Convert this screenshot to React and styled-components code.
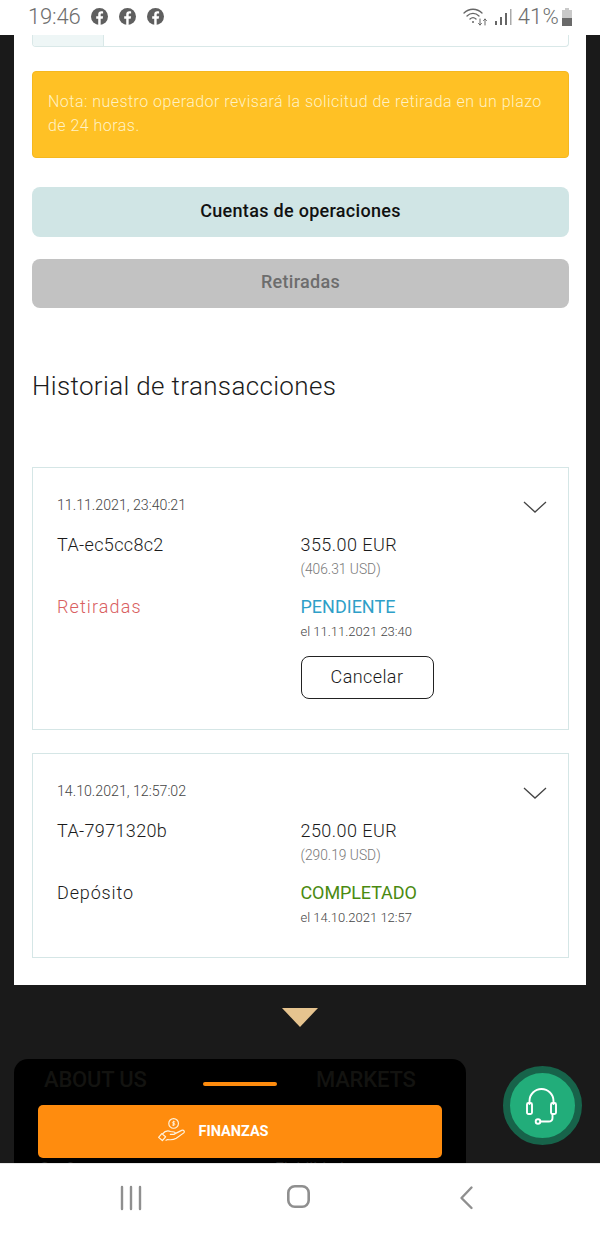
import React from 'react';
import styled, { createGlobalStyle } from 'styled-components';

const Global = createGlobalStyle`
  html, body { margin: 0; padding: 0; height: 100%; }
  body { font-family: Roboto, "Liberation Sans", sans-serif; background: #1a1a1a; }
  * { box-sizing: border-box; }
`;
const Screen = styled.div`
  position: relative; width: 600px; height: 1233px; overflow: hidden;
  display: flex; flex-direction: column; background: #1a1a1a;
`;
const StatusBar = styled.div`
  height: 35px; background: #fff; flex: none; display: flex; align-items: center;
  justify-content: space-between; padding: 0 27px 2px 28px; color: #6e6e6e;
`;
const StatusGroup = styled.div`display: flex; align-items: center; gap: ${p => p.$gap || 0}px;`;
const Clock = styled.span`font-size: 22px; font-weight: 300; letter-spacing: -.2px;`;
const Percent = styled.span`font-size: 22px; font-weight: 300; letter-spacing: .2px;`;
const Main = styled.div`flex: 1; min-height: 0; overflow: hidden; display: flex; flex-direction: column;`;
const Panel = styled.div`
  flex: none; margin: 0 14px; height: 950px; background: #fff; padding: 0 17px 0 18px;
  display: flex; flex-direction: column;
`;
const ClippedTable = styled.div`
  flex: none; height: 12px; display: flex; border: 1px solid #d9e8e8; border-top: 0;
  border-radius: 0 0 4px 4px; overflow: hidden;
`;
const ClippedCell = styled.div`width: 71px; background: #eef6f6; border-right: 1px solid #d9e8e8;`;
const Note = styled.div`
  margin-top: 24px; height: 87px; background: #ffc125; border: 1px solid #f5b81f; border-radius: 4px;
  padding: 18px 15px; color: #fff2c4; font-size: 16px; line-height: 24px; font-weight: 300; letter-spacing: .47px;
`;
const WideButton = styled.div`
  height: ${p => p.$h}px; margin-top: ${p => p.$mt}px; border-radius: 8px; background: ${p => p.$bg};
  color: ${p => p.$fg}; display: flex; align-items: center; justify-content: center; padding-bottom: ${p => p.$pb}px;
  font-size: 18px; font-weight: 500; letter-spacing: .3px;
`;
const Heading = styled.h2`
  margin: 59px 0 0; height: 38px; line-height: 38px; font-size: 26px; font-weight: 300; color: #1b1b1b; letter-spacing: .35px;
`;
const Card = styled.div`
  position: relative; height: ${p => p.$h}px; margin-top: ${p => p.$mt}px; border: 1px solid #d5e6e6;
  padding: 27px 24px 0; display: grid; grid-template-columns: 243.5px 1fr; grid-auto-rows: min-content;
  color: #1b1b1b;
`;
const Stamp = styled.div`
  grid-column: 1 / -1; height: 21px; line-height: 21px; font-size: 14.2px; font-weight: 300; color: #444; letter-spacing: 0;
`;
const Toggle = styled.svg`position: absolute; top: 33px; right: 21px;`;
const Big = styled.div`
  font-size: 18px; line-height: 24px; font-weight: ${p => p.$w || 300}; color: ${p => p.$c || '#1b1b1b'};
  letter-spacing: ${p => p.$ls ?? .35}px; margin-top: ${p => p.$mt || 0}px;
`;
const Small = styled.div`font-size: ${p => p.$s || 14}px; line-height: 20px; font-weight: 300; color: ${p => p.$c || '#444'}; letter-spacing: ${p => p.$ls ?? 0}px; margin-top: ${p => p.$mt || 0}px;`;
const Col = styled.div`display: flex; flex-direction: column; align-items: flex-start;`;
const Row = styled.div`grid-column: 1 / -1; display: grid; grid-template-columns: 243.5px 1fr; margin-top: ${p => p.$mt}px;`;
const Cancel = styled.div`
  width: 133px; height: 43px; margin-top: 14px; border: 1px solid #222; border-radius: 8px; padding-bottom: 2px;
  display: flex; align-items: center; justify-content: center; font-size: 18px; font-weight: 300; letter-spacing: .4px; color: #1b1b1b;
`;
const Arrow = styled.div`
  flex: none; width: 0; height: 0; margin: 23px auto 0;
  border-left: 18.5px solid transparent; border-right: 18.5px solid transparent; border-top: 19px solid #e6c48f;
`;
const Menu = styled.div`
  flex: none; width: 452px; height: 150px; margin: 32px 0 0 14px; background: #000; border-radius: 14px 14px 0 0;
  padding: 7px 24px 0; display: flex; flex-direction: column;
`;
const MenuTabs = styled.div`display: grid; grid-template-columns: 178px 1fr; align-items: start; height: 39px;`;
const MenuTab = styled.div`font-size: 22px; line-height: 28px; font-weight: 500; color: #131310; padding-left: ${p => p.$pl || 0}px; letter-spacing: -.2px;`;
const Handle = styled.div`
  position: absolute; left: 203px; top: 1082px; width: 74px; height: 4px; border-radius: 2px; background: #ff8c0e;
`;
const Finance = styled.div`
  flex: none; height: 53px; background: #ff8c0e; border-radius: 5px; display: flex; align-items: center; justify-content: center;
  gap: 11px; color: #fff; font-size: 14.5px; font-weight: 700; padding-right: 54px;
`;
const MenuRow = styled.div`display: grid; grid-template-columns: 236px 1fr; padding-left: 1px; margin-top: 1px; font-size: 16px; color: #222;`;
const Fab = styled.div`
  position: absolute; left: 503px; top: 1066px; width: 79px; height: 79px; border-radius: 50%;
  background: #22ad7a; border: 7px solid #17634a; display: flex; align-items: center; justify-content: center;
`;
const NavBar = styled.div`flex: none; height: 70px; background: #fff; border-top: 1px solid #e8e8e8;`;
const NavSlot = styled.div`position: absolute; top: 1183px; left: ${p => p.$x}px;`;

const Fb = () => (
  <svg width="17" height="17" viewBox="0 0 16 16">
    <circle cx="8" cy="8" r="8" fill="#5f5f5f" />
    <path d="M9.1 16V10h1.9l.4-2.3H9.1V6.3c0-.7.3-1.1 1.2-1.1h1.1V3.2c-.4-.1-1-.1-1.7-.1-1.8 0-2.9 1-2.9 2.9v1.7H4.9V10h1.900v6z" fill="#fff" />
  </svg>
);
const Chevron = () => (
  <Toggle width="24" height="13" viewBox="0 0 24 13" fill="none" stroke="#444" strokeWidth="1.3">
    <path d="M1 1l11 10L23 1" />
  </Toggle>
);

export default function App() {
  return (
    <Screen>
      <Global />
      <StatusBar>
        <StatusGroup $gap={11}>
          <Clock>19:46</Clock><Fb /><Fb /><Fb />
        </StatusGroup>
        <StatusGroup>
          <svg width="26" height="20" viewBox="0 0 26 20" fill="none" stroke="#666" strokeWidth="1.3" strokeLinecap="round" style={{ marginRight: 5 }}>
            <path d="M1 6c5-5 13-5 18 0M4 9c3.5-3.4 8.500-3.400 12 0M7 12c2-1.800 4-1.800 6 0" />
            <circle cx="10" cy="15" r="1" fill="#666" stroke="none" />
            <path d="M17 12v6M15.500 16.500l1.500 1.500 1.500-1.500M22 18v-6M20.500 13.500l1.500-1.500 1.500 1.500" strokeWidth="1" />
          </svg>
          <svg width="20" height="18" viewBox="0 0 20 18" fill="#666" style={{ marginRight: 4 }}>
            <rect x="1" y="13" width="2" height="4" /><rect x="6" y="9" width="2" height="8" />
            <rect x="11" y="5" width="2" height="12" /><rect x="16" y="1" width="1.500" height="16" fill="#aaa" />
          </svg>
          <Percent>41%</Percent>
          <svg width="12" height="18" viewBox="0 0 12 18" style={{ marginLeft: 2 }}>
            <path d="M4 0h4v2h3v16H1V2h3z" fill="#c9c9c9" /><rect x="1" y="10" width="10" height="8" fill="#6a6a6a" />
          </svg>
        </StatusGroup>
      </StatusBar>
      <Main>
        <Panel>
          <ClippedTable><ClippedCell /></ClippedTable>
          <Note>Nota: nuestro operador revisará la solicitud de retirada en un plazo de 24 horas.</Note>
          <WideButton $h={50} $mt={29} $pb={3} $bg="#d0e5e5" $fg="#111">Cuentas de operaciones</WideButton>
          <WideButton $h={49} $mt={22} $pb={4} $bg="#c2c2c2" $fg="#6d6d6d">Retiradas</WideButton>
          <Heading>Historial de transacciones</Heading>
          <Card $h={263} $mt={62}>
            <Stamp>11.11.2021, 23:40:21</Stamp>
            <Chevron />
            <Row $mt={17}>
              <Big>TA-ec5cc8c2</Big>
              <Col><Big $ls={.45}>355.00 EUR</Big><Small $s={13.8} $c="#777" $mt={2}>(406.31 USD)</Small></Col>
            </Row>
            <Row $mt={16}>
              <Big $c="#d9605f" $ls={1.1}>Retiradas</Big>
              <Col>
                <Big $c="#2f9fc8" $w={400} $ls={0}>PENDIENTE</Big>
                <Small $s={13} $mt={3}>el 11.11.2021 23:40</Small>
                <Cancel>Cancelar</Cancel>
              </Col>
            </Row>
          </Card>
          <Card $h={205} $mt={23}>
            <Stamp>14.10.2021, 12:57:02</Stamp>
            <Chevron />
            <Row $mt={17}>
              <Big>TA-7971320b</Big>
              <Col><Big $ls={.45}>250.00 EUR</Big><Small $s={13.8} $c="#777" $mt={2}>(290.19 USD)</Small></Col>
            </Row>
            <Row $mt={16}>
              <Big $ls={.85}>Depósito</Big>
              <Col>
                <Big $c="#4a8a10" $w={400} $ls={-.1}>COMPLETADO</Big>
                <Small $s={13} $mt={3}>el 14.10.2021 12:57</Small>
              </Col>
            </Row>
          </Card>
        </Panel>
        <Arrow />
        <Menu>
          <MenuTabs>
            <MenuTab $pl={6}>ABOUT US</MenuTab>
            <MenuTab $pl={100}>MARKETS</MenuTab>
          </MenuTabs>
          <Finance>
            <svg width="30" height="30" viewBox="0 0 28 28" fill="none" stroke="#fff4df" strokeWidth="1.1" strokeLinejoin="round">
              <circle cx="15.500" cy="6" r="4.500" />
              <path d="M15.500 3.500v5M17 4.500h-2.200a1 1 0 0 0 0 1.500h1.500a1 1 0 0 1 0 1.500H14" strokeWidth=".8" />
              <path d="M5 22l-3.500-3 3-3.500 3.500 3zM5 16c2-2.500 5-3.500 7.500-2.500l3.500.5c1.500.3 1.300 2.200-.2 2.200H12M16 16l7-3.500c2-.8 3.300 1 2 2.300l-7 5c-2.500 1.500-5 1.700-8 1.200L8 22" />
            </svg>
            FINANZAS
          </Finance>
          <MenuRow><span>Gas?</span><span>Fiabilidad</span></MenuRow>
        </Menu>
      </Main>
      <Handle />
      <Fab>
        <svg width="33" height="38" viewBox="0 0 32 38" fill="none" stroke="#fff" strokeWidth="1.9" strokeLinejoin="round" strokeLinecap="round" style={{ marginRight: 3 }}>
          <path d="M4 17V14a12 12 0 0 1 24 0v3" />
          <rect x="1.500" y="16" width="5" height="11" rx="1.500" />
          <rect x="25.500" y="16" width="5" height="11" rx="1.500" />
          <path d="M27 27v4c0 2-1.500 3.500-4 3.500h-8" />
          <circle cx="12.500" cy="34.500" r="2.300" />
        </svg>
      </Fab>
      <NavBar />
      <NavSlot $x={119}>
        <svg width="24" height="28" viewBox="0 0 24 28" stroke="#8f8f8f" strokeWidth="2.400" strokeLinecap="round"><path d="M3 4v22M12 4v22M21 4v22" /></svg>
      </NavSlot>
      <NavSlot $x={285}>
        <svg width="26" height="28" viewBox="0 0 26 28" fill="none" stroke="#8f8f8f" strokeWidth="2.600"><rect x="3.300" y="3.300" width="20.400" height="20.400" rx="6.500" /></svg>
      </NavSlot>
      <NavSlot $x={456}>
        <svg width="20" height="28" viewBox="0 0 20 28" fill="none" stroke="#8f8f8f" strokeWidth="2.400" strokeLinecap="round" strokeLinejoin="round"><path d="M15.500 4.500L5.500 15l10 10" /></svg>
      </NavSlot>
    </Screen>
  );
}
